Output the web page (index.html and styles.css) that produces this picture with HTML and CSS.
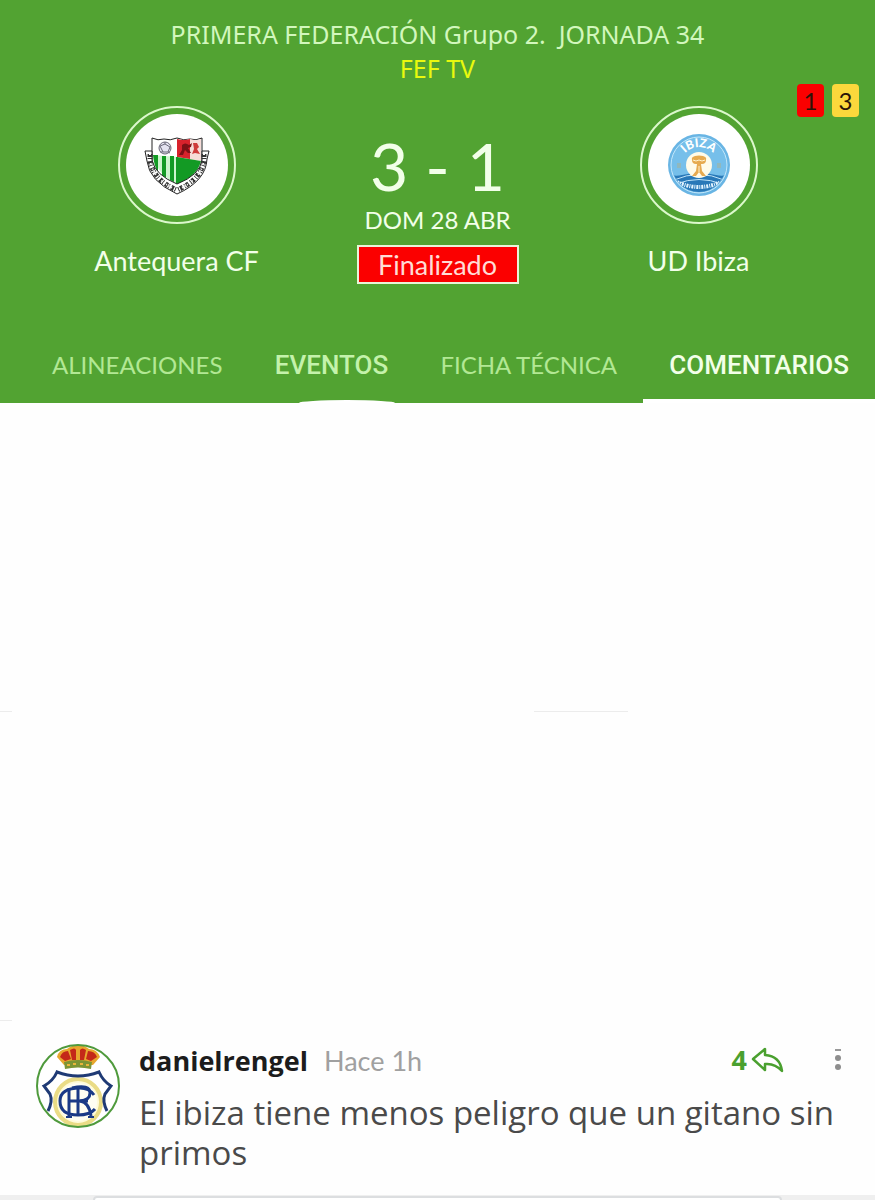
FILE: index.html
```
<!DOCTYPE html>
<html lang="es">
<head>
  <meta charset="UTF-8">
  <meta name="viewport" content="width=device-width, initial-scale=1.0">
  <title>Antequera CF 3 - 1 UD Ibiza</title>
  <link rel="stylesheet" href="styles.css">
</head>
<body>
  <!-- Cabecera del partido -->
  <header class="match-header">
    <div class="cards">
      <span class="card card-red">1</span>
      <span class="card card-yellow">3</span>
    </div>

    <p class="competition">PRIMERA FEDERACIÓN Grupo 2.&nbsp; JORNADA 34</p>
    <p class="channel">FEF TV</p>

    <div class="scoreboard">
      <div class="team">
        <div class="crest">
          <svg class="crest-img" viewBox="0 0 102 102" aria-hidden="true">
            <path d="M26 24 Q32 27 38 25 Q44 27 51 24 Q58 27 64 25 Q70 27 76 24 V50 Q74 64 51 73 Q28 64 26 50Z" fill="#fff" stroke="#222"/>
            <path d="M51 25 Q58 27 64 25 Q70 27 75 25 V47 L51 43Z" fill="#f6dcd8"/>
            <path d="M51 25 Q58 27 64 25 V45 L51 43Z" fill="#d8222c"/>
            <path d="M27 41 L51 43 V70 Q31 61 27 41Z" fill="#cdf5cd"/>
            <path d="M51 43 L75 47 Q72 61 52 70Z" fill="#139a24"/>
            <path d="M27 41h5v17q-4-6-5-17zM36 42h4v22l-4-3zM44 42h4v26l-4-2zM50 43h2v27h-2z" fill="#139a24"/>
            <circle cx="39" cy="34" r="6" fill="#e4e3f0" stroke="#6a6878"/>
            <path d="M34 32l5-2 5 3-2 5h-5zM39 28v2M34 38l3 0M42 38l2 1" fill="none" stroke="#6a6878"/>
            <path d="M56 31q3-3 7 0l3-2-1 4-3 1 3 5h-3l-3-3-2 5-4 0 3-5z" fill="#7d1015"/>
            <path d="M67 29h4l2 4-2 2 3 5-5-1-3 1 2-5z" fill="#cf3a3a"/>
            <path d="M19 37h7v9q3 15 25 24 23-9 25-24v-9h7l-2 8q-1 22-30 35-28-13-30-33z" fill="#fff" stroke="#222"/>
            <path d="M24 40v6q3 20 27 30M78 40v6q-3 20-27 30" fill="none" stroke="#333" stroke-width="5" stroke-dasharray="3 1 1 2"/>
            <path d="M24 40v6q3 20 27 30M78 40v6q-3 20-27 30" fill="none" stroke="#fff" stroke-width="2" stroke-dasharray="1 2"/>
          </svg>
        </div>
        <p class="team-name">Antequera CF</p>
      </div>

      <div class="result">
        <p class="score">3 - 1</p>
        <p class="date">DOM 28 ABR</p>
        <p class="status">Finalizado</p>
      </div>

      <div class="team">
        <div class="crest">
          <svg class="crest-img" viewBox="0 0 102 102" aria-hidden="true">
            <defs>
              <path id="arcTop" d="M32 52 A19 19 0 0 1 70 52"/>
              <clipPath id="sea"><circle cx="51" cy="51" r="27"/></clipPath>
            </defs>
            <circle cx="51" cy="51" r="31" fill="#69b5e4"/>
            <circle cx="51" cy="51" r="28" fill="#76bfea" stroke="#c5e8fa"/>
            <g clip-path="url(#sea)">
              <path d="M20 60q7 3 14 1 17-4 34 0 7 2 14-1v22H20z" fill="#2878b8"/>
              <path d="M26 66q25-11 50 0M28 70q23-9 46 0" fill="none" stroke="#bfe4f8"/>
              <path d="M29 68q22 10 44 0" fill="none" stroke="#e4f5ff" stroke-width="4" stroke-dasharray="2 1 1 1"/>
            </g>
            <circle cx="51" cy="51" r="13" fill="#fffbe9"/>
            <path d="M44 46q-1-3 3-4 4-1 8 0 4 1 3 4 0 4-4 4h-1l1 7 4 5h-4l-3-4-3 4h-4l4-5 1-7h-1q-4 0-4-4z" fill="#e6aa50"/>
            <path d="M51 52v6M45 46q3 2 6 0 3 2 6 0" fill="none" stroke="#fff3cf"/>
            <path d="M29 49h4v5h-4zM69 49h4v5h-4z" fill="#91b8bd"/>
            <text class="crest-text"><textPath href="#arcTop" startOffset="50%">IBIZA</textPath></text>
          </svg>
        </div>
        <p class="team-name">UD Ibiza</p>
      </div>
    </div>

    <nav class="tabs">
      <a href="#alineaciones" class="tab">ALINEACIONES</a>
      <a href="#eventos" class="tab tab-events">EVENTOS</a>
      <a href="#ficha" class="tab">FICHA TÉCNICA</a>
      <a href="#comentarios" class="tab active">COMENTARIOS</a>
    </nav>
  </header>

  <!-- Comentarios -->
  <main class="feed" id="comentarios">
    <div class="slot">
      <span class="rule rule-start"></span>
      <span class="rule rule-middle"></span>
    </div>
    <div class="slot">
      <span class="rule rule-start"></span>
    </div>

    <article class="comment">
      <svg class="avatar" viewBox="0 0 84 84" aria-hidden="true">
        <defs>
          <clipPath id="avatarClip"><circle cx="42" cy="42" r="41"/></clipPath>
        </defs>
        <circle cx="42" cy="42" r="41" fill="#fff"/>
        <g clip-path="url(#avatarClip)">
          <circle cx="42" cy="58" r="23" fill="#fffbd9" stroke="#eadc86" stroke-width="4"/>
          <circle cx="42" cy="58" r="19" fill="#fffef2"/>
          <path d="M12 67q5-10 2-17l-6-8q9-5 13-14 21 8 42 0 4 9 12 14l-6 8q-3 7 2 17" fill="none" stroke="#1f3a75" stroke-width="3"/>
          <path d="M21 13q2-8 10-8 5-4 11-4t11 4q8 0 11 8l-7 8H28z" fill="#e8a72e"/>
          <path d="M24 13q2-6 8-6l3 8-6 2zM34 6q5-3 6 0v10h-4zM44 6q2-3 6 0l-2 10h-4zM52 7q7 0 9 6l-6 4-5-2z" fill="#c42819"/>
          <path d="M28 18q14-4 28 0l-1 7q-13-3-26 0z" fill="#7c9434"/>
          <path d="M31 21h3M37 20h3M44 20h3M50 21h3" stroke="#e9b53b" stroke-width="2"/>
        </g>
        <g fill="none" stroke="#1b3a86" stroke-width="3">
          <path d="M33 44v29M42 43v28M33 57h19"/>
          <path d="M36 44q18-4 18 5 0 7-10 8 9 1 11 15"/>
          <path d="M58 51q-5-7-14-7-20 0-20 13 0 14 18 14 12 0 17-6"/>
        </g>
        <path d="M30 73h6M52 73h6" stroke="#1b3a86" stroke-width="2"/>
        <circle cx="42" cy="42" r="41" fill="none" stroke="#4f9a3c" stroke-width="2"/>
      </svg>

      <div class="comment-body">
        <div class="comment-head">
          <span class="user">danielrengel</span>
          <span class="time">Hace 1h</span>
          <button type="button" class="reply" aria-label="4 respuestas">
            4
            <svg class="reply-icon" viewBox="0 0 34 26" aria-hidden="true">
              <path d="M2 12 L14 2 V8 Q29 9 31 24 Q24 16 14 17 V23Z" fill="none" stroke="#4aa02f" stroke-width="2.5" stroke-linejoin="round"/>
            </svg>
          </button>
          <button type="button" class="more" aria-label="Más opciones">
            <svg class="more-icon" viewBox="0 0 8 22" aria-hidden="true">
              <path d="M1 1h6" stroke="#999" stroke-width="2"/>
              <circle cx="4" cy="9" r="3" fill="#8e8e8e"/>
              <circle cx="4" cy="18" r="3" fill="#8e8e8e"/>
            </svg>
          </button>
        </div>
        <p class="comment-text">El ibiza tiene menos peligro que un gitano sin primos</p>
      </div>
    </article>
  </main>

  <!-- Caja para escribir, asoma por abajo -->
  <footer class="composer">
    <input type="text" class="composer-input" aria-label="Escribe un comentario">
  </footer>
</body>
</html>
```
FILE: styles.css
```
:root {
  --green: #52a332;
  --pale: #d2f7bd;
  --pale-strong: #f2ffe9;
  --text-dark: #4a4a4a;
  --text-light: #a0a0a0;
  --line: #ececec;
}

* {
  margin: 0;
  padding: 0;
  box-sizing: border-box;
}

body {
  min-height: 100vh;
  display: flex;
  flex-direction: column;
  background: #fefefe;
  font-family: 'Lato', sans-serif;
}

/* Cabecera */
.match-header {
  position: relative;
  background: var(--green);
  color: var(--pale-strong);
  padding-top: 17px;
  text-align: center;
}

.competition,
.channel {
  font-family: 'Noto Sans', sans-serif;
  font-size: 25px;
  line-height: 34px;
}

.competition {
  color: var(--pale);
}

.channel {
  color: #e9f90e;
}

/* Tarjetas sobre el equipo visitante */
.cards {
  position: absolute;
  top: 84px;
  right: 16px;
  display: flex;
  gap: 8px;
}

.card {
  width: 27px;
  height: 33px;
  border-radius: 4px;
  color: #2a1408;
  font-size: 24px;
  line-height: 34px;
}

.card-red {
  background: #fb0000;
}

.card-yellow {
  background: #fbd83c;
}

/* Marcador */
.scoreboard {
  display: grid;
  grid-template-columns: repeat(3, 1fr);
  padding: 21px 46px 0;
}

.team {
  display: flex;
  flex-direction: column;
  align-items: center;
}

.crest {
  width: 118px;
  height: 118px;
  padding: 6px;
  border: 2px solid #dcf8cc;
  border-radius: 50%;
}

.crest-img {
  display: block;
  width: 102px;
  height: 102px;
  border-radius: 50%;
  background: #fff;
}

.crest-text {
  fill: #fff;
  font-size: 12px;
  font-weight: 900;
  text-anchor: middle;
}

.team-name {
  margin-top: 19px;
  font-size: 27px;
  line-height: 36px;
}

.result {
  display: flex;
  flex-direction: column;
  align-items: center;
  padding-top: 24px;
}

.score {
  font-size: 66px;
  line-height: 72px;
}

.date {
  font-size: 24px;
  line-height: 36px;
}

.status {
  width: 162px;
  margin-top: 7px;
  border: 2px solid #e9f5d8;
  background: #fb0000;
  color: #ffdcd6;
  font-size: 27px;
  line-height: 35px;
}

/* Pestañas */
.tabs {
  display: flex;
  justify-content: space-between;
  margin-top: 64px;
  padding-left: 26px;
}

.tab {
  position: relative;
  padding: 0 26px 17px;
  border-bottom: 4px solid transparent;
  color: #b2e894;
  font-size: 24px;
  line-height: 34px;
  text-decoration: none;
  white-space: nowrap;
}

.tab-events,
.tab.active {
  font-family: 'Roboto', sans-serif;
  font-size: 26px;
  font-weight: 500;
}

.tab-events {
  color: #c4f2ab;
}

.tab-events::after {
  content: '';
  position: absolute;
  left: 50%;
  bottom: -4px;
  width: 96px;
  height: 3px;
  margin-left: -32px;
  border-radius: 50% 50% 0 0 / 100% 100% 0 0;
  background: #fff;
}

.tab.active {
  border-bottom-color: #fff;
  color: var(--pale-strong);
}

/* Lista de comentarios */
.feed {
  flex: 1;
}

.slot {
  display: flex;
  align-items: flex-end;
  min-height: 309px;
}

.rule {
  height: 1px;
  background: var(--line);
}

.rule-start {
  width: 12px;
}

.rule-middle {
  width: 94px;
  margin-left: 522px;
}

.comment {
  display: flex;
  gap: 19px;
  padding: 23px 24px 22px 36px;
}

.avatar {
  flex: none;
  width: 84px;
  height: 84px;
}

.comment-body {
  flex: 1;
}

.comment-head {
  display: flex;
  align-items: center;
  height: 32px;
  margin-bottom: 17px;
}

.user {
  color: #1c1c1c;
  font-family: 'Open Sans', sans-serif;
  font-size: 27px;
  font-weight: 700;
}

.time {
  margin-left: 16px;
  color: var(--text-light);
  font-size: 27px;
}

.reply {
  display: flex;
  align-items: center;
  gap: 4px;
  margin-left: auto;
  border: none;
  background: none;
  color: #4aa02f;
  font-family: 'Noto Sans', sans-serif;
  font-size: 27px;
  font-weight: 700;
  line-height: 32px;
}

.reply-icon {
  width: 34px;
  height: 26px;
}

.more {
  margin: 0 9px 0 49px;
  border: none;
  background: none;
}

.more-icon {
  display: block;
  width: 8px;
  height: 22px;
}

.comment-text {
  color: var(--text-dark);
  font-family: 'Open Sans', sans-serif;
  font-size: 33px;
  line-height: 40px;
}

/* Barra inferior */
.composer {
  height: 6px;
  padding: 1px 93px 0;
  background: #efefef;
  overflow: hidden;
}

.composer-input {
  display: block;
  width: 100%;
  height: 60px;
  border: 2px solid #dcdee0;
  border-radius: 4px;
  background: #fff;
}
```
